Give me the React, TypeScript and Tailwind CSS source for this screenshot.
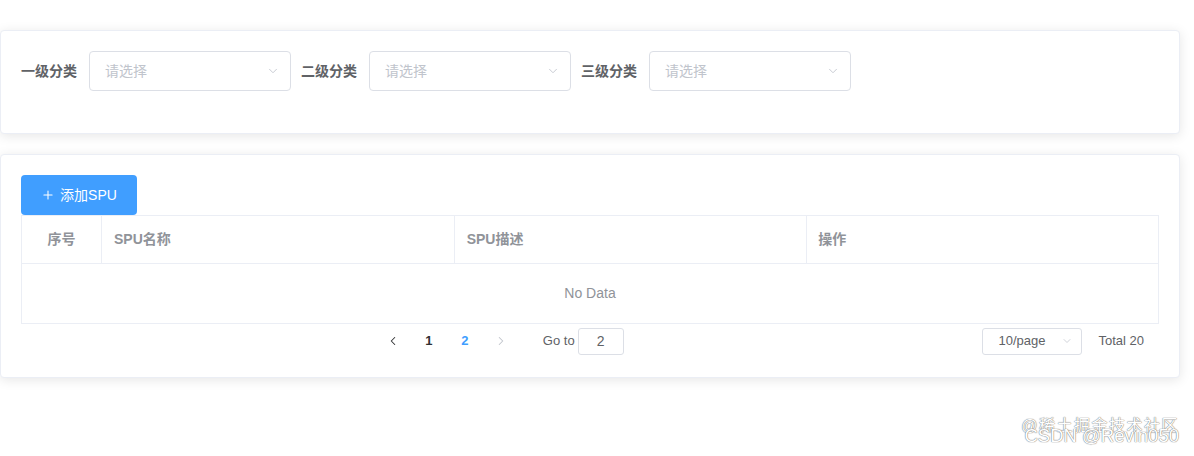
import { Plus, ChevronDown, ChevronLeft, ChevronRight } from 'lucide-react';

const font = 'font-["Liberation_Sans","Noto_Sans_CJK_SC",sans-serif]';

function CategorySelect({ label }: { label: string }) {
  return (
    <div className="flex items-center mr-[10px] mb-[22px]">
      <span className="text-[14px] font-bold text-[#606266] pr-[12px] leading-[40px]">{label}</span>
      <div className="w-[202px] h-[40px] border border-[#dcdfe6] rounded-[4px] flex items-center justify-between pl-[15px] pr-[10px]">
        <span className="text-[14px] text-[#c0c4cc]">请选择</span>
        <ChevronDown className="w-[14px] h-[14px] text-[#c0c4cc]" strokeWidth={1.5} />
      </div>
    </div>
  );
}

function Pagination() {
  return (
    <div className="flex items-center h-[32px] px-[5px] mt-[1px] text-[13px] text-[#606266]">
      <div className="flex-1 flex justify-center items-center">
        <div className="w-[36px] h-[28px] flex items-center justify-center text-[#303133]">
          <ChevronLeft className="w-[14px] h-[14px]" strokeWidth={1.8} />
        </div>
        <div className="w-[36px] h-[28px] flex items-center justify-center font-bold text-[#303133]">1</div>
        <div className="w-[36px] h-[28px] flex items-center justify-center font-bold text-[#409eff]">2</div>
        <div className="w-[36px] h-[28px] flex items-center justify-center text-[#c0c4cc]">
          <ChevronRight className="w-[14px] h-[14px]" strokeWidth={1.8} />
        </div>
        <span className="ml-[24px]">Go to</span>
        <div className="ml-[3px] w-[46px] h-[27px] border border-[#dcdfe6] rounded-[3px] flex items-center justify-center text-[14px] text-[#606266]">
          2
        </div>
      </div>
      <div className="ml-[10px] w-[100px] h-[27px] border border-[#dcdfe6] rounded-[3px] flex items-center justify-between pl-[15px] pr-[8px]">
        <span>10/page</span>
        <ChevronDown className="w-[12px] h-[12px] text-[#c0c4cc]" strokeWidth={1.5} />
      </div>
      <span className="ml-[16px] mr-[10px]">Total 20</span>
    </div>
  );
}

export default function App() {
  return (
    <div className={`relative w-[1194px] h-[456px] bg-white overflow-hidden ${font}`}>
      <div className="pt-[30px] w-[1180px]">
        <div className="border border-[#ebeef5] rounded-[4px] shadow-[0_2px_12px_0_rgba(0,0,0,0.1)] bg-white p-[20px]">
          <div className="flex items-center">
            <CategorySelect label="一级分类" />
            <CategorySelect label="二级分类" />
            <CategorySelect label="三级分类" />
          </div>
        </div>

        <div className="mt-[20px] border border-[#ebeef5] rounded-[4px] shadow-[0_2px_12px_0_rgba(0,0,0,0.1)] bg-white px-[20px] pt-[20px] pb-[20px]">
          <button className="h-[40px] w-[116px] bg-[#409eff] text-white text-[14px] rounded-[4px] flex items-center justify-center gap-[5px]">
            <Plus className="w-[14px] h-[14px]" strokeWidth={1.8} />
            <span>添加SPU</span>
          </button>

          <div className="border border-[#ebeef5] text-[14px]">
            <div className="flex h-[48px] border-b border-[#ebeef5] text-[#909399] font-bold">
              <div className="w-[80px] border-r border-[#ebeef5] flex items-center justify-center">序号</div>
              <div className="flex-1 border-r border-[#ebeef5] flex items-center pl-[12px]">SPU名称</div>
              <div className="flex-1 border-r border-[#ebeef5] flex items-center pl-[12px]">SPU描述</div>
              <div className="flex-1 flex items-center pl-[11px]">操作</div>
            </div>
            <div className="h-[59px] flex items-center justify-center text-[#909399]">No Data</div>
          </div>

          <Pagination />
        </div>
      </div>

      <div className="absolute right-[15px] top-[414px] text-[16px] text-white [text-shadow:0_0_1px_#777,0_0_1px_#777] tracking-[1.5px]">
        @稀土掘金技术社区
      </div>
      <div className="absolute right-[15px] top-[422px] text-[18.5px] text-white [text-shadow:0_0_1px_#777,0_0_1px_#777]">
        CSDN @Revin050
      </div>
    </div>
  );
}
